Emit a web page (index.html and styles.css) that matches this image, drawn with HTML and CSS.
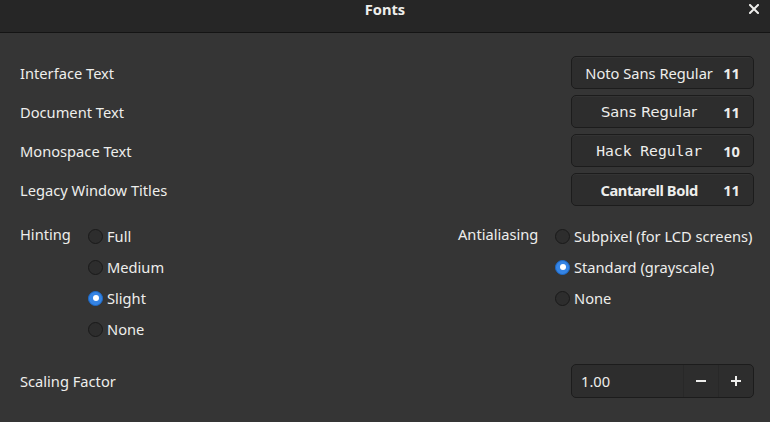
FILE: index.html
```html
<!DOCTYPE html>
<html>
<head>
<meta charset="utf-8">
<link rel="stylesheet" href="styles.css">
</head>
<body>
<div class="window">
  <header class="headerbar">
    <span class="title">Fonts</span>
    <span class="close">
      <svg width="10" height="10" viewBox="0 0 10 10"><path d="M1 1L9 9M9 1L1 9" stroke="#eeeeec" stroke-width="2" stroke-linecap="square"/></svg>
    </span>
  </header>
  <main class="content">
    <div class="font-rows">
      <div class="row"><span class="label">Interface Text</span><button class="font-btn"><span class="fname">Noto Sans Regular</span><span class="fsize">11</span></button></div>
      <div class="row"><span class="label">Document Text</span><button class="font-btn"><span class="fname sans">Sans Regular</span><span class="fsize">11</span></button></div>
      <div class="row"><span class="label">Monospace Text</span><button class="font-btn"><span class="fname mono">Hack Regular</span><span class="fsize">10</span></button></div>
      <div class="row"><span class="label">Legacy Window Titles</span><button class="font-btn"><span class="fname bold">Cantarell Bold</span><span class="fsize">11</span></button></div>
    </div>
    <div class="options">
      <div class="group hinting">
        <span class="glabel">Hinting</span>
        <div class="radios">
          <label class="radio"><span class="dot"></span>Full</label>
          <label class="radio"><span class="dot"></span>Medium</label>
          <label class="radio"><span class="dot on"></span>Slight</label>
          <label class="radio"><span class="dot"></span>None</label>
        </div>
      </div>
      <div class="group anti">
        <span class="glabel">Antialiasing</span>
        <div class="radios">
          <label class="radio"><span class="dot"></span>Subpixel (for LCD screens)</label>
          <label class="radio"><span class="dot on"></span>Standard (grayscale)</label>
          <label class="radio"><span class="dot"></span>None</label>
        </div>
      </div>
    </div>
    <div class="row scale-row">
      <span class="label">Scaling Factor</span>
      <div class="spin">
        <span class="spin-val">1.00</span>
        <span class="spin-btn"><svg width="12" height="12" viewBox="0 0 12 12"><path d="M1 6H11" stroke="#eeeeec" stroke-width="2"/></svg></span>
        <span class="spin-btn"><svg width="12" height="12" viewBox="0 0 12 12"><path d="M1 6H11M6 1V11" stroke="#eeeeec" stroke-width="2"/></svg></span>
      </div>
    </div>
  </main>
</div>
</body>
</html>
```

FILE: styles.css
```css
* { box-sizing: border-box; }
html, body { margin: 0; padding: 0; }
body {
  width: 770px;
  height: 422px;
  background: #353535;
  font-family: "Noto Sans", sans-serif;
  font-size: 14.67px;
  color: #eeeeec;
  overflow: hidden;
}
.window { width: 770px; height: 422px; display: flex; flex-direction: column; }
.headerbar {
  height: 33px;
  background: #262626;
  border-bottom: 1px solid #141414;
  display: flex;
  align-items: flex-start;
  justify-content: center;
  position: relative;
  flex-shrink: 0;
}
.title {
  font-weight: bold;
  font-size: 14.67px;
  line-height: 18px;
  color: #eeeeec;
}
.close {
  position: absolute;
  right: 11px;
  top: 4px;
  width: 10px;
  height: 10px;
  display: flex;
}
.content {
  padding: 23px 16px 0 20px;
  display: flex;
  flex-direction: column;
}
.font-rows { display: flex; flex-direction: column; gap: 6px; }
.row {
  display: flex;
  align-items: center;
  justify-content: space-between;
}
.label { line-height: 20px; }
.font-btn {
  width: 183px;
  height: 33px;
  background: #2d2d2d;
  border: 1px solid #1c1c1c;
  border-radius: 5px;
  color: #eeeeec;
  font-family: "Noto Sans", sans-serif;
  font-size: 14.67px;
  display: flex;
  align-items: center;
  justify-content: flex-end;
  padding: 0 13px 0 9px;
  box-shadow: inset 0 1px rgba(255,255,255,0.03);
}
.fname { flex: 1; text-align: center; padding-right: 6px; }
.fname.sans { font-family: "DejaVu Sans", sans-serif; font-size: 14.67px; }
.fname.mono { font-family: "DejaVu Sans Mono", monospace; font-size: 14.67px; }
.fname.bold { font-weight: bold; font-family: "Noto Sans", sans-serif; letter-spacing: -0.4px; }
.fsize { font-weight: bold; }
.options {
  display: flex;
  margin-top: 20px;
}
.group { display: flex; align-items: flex-start; }
.hinting { width: 438px; }
.hinting .glabel { width: 68px; }
.anti .glabel { width: 97px; }
.glabel { line-height: 18px; margin-top: -1px; }
.radios { display: flex; flex-direction: column; gap: 11px; }
.radio { display: flex; align-items: center; height: 20px; }
.dot {
  width: 15px;
  height: 15px;
  border-radius: 50%;
  border: 1px solid #1a1a1a;
  background: #2d2d2d;
  margin-right: 4px;
  display: inline-flex;
  align-items: center;
  justify-content: center;
}
.dot.on { background: #3584e4; border-color: #1b6acb; }
.dot.on::after {
  content: "";
  width: 6px;
  height: 6px;
  border-radius: 50%;
  background: #ffffff;
}
.scale-row { margin-top: 25px; }
.spin {
  width: 183px;
  height: 34px;
  border: 1px solid #1c1c1c;
  border-radius: 5px;
  background: #2d2d2d;
  display: flex;
  overflow: hidden;
}
.spin-val {
  flex: 1;
  display: flex;
  align-items: center;
  padding-left: 9px;
}
.spin-btn {
  width: 35px;
  display: flex;
  align-items: center;
  justify-content: center;
  border-left: 1px solid #282828;
}
```
